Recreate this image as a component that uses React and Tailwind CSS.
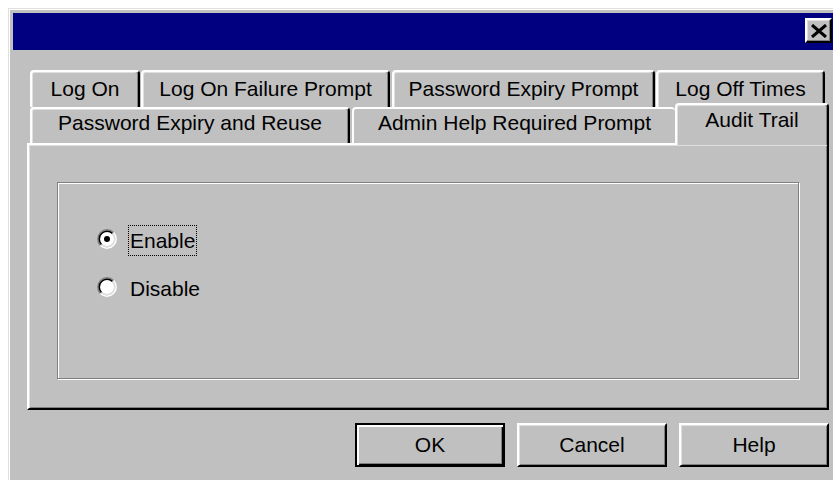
import React from 'react';

const BACK_ROW = [
  { label: 'Log On', cls: 'w-[110px]' },
  { label: 'Log On Failure Prompt', cls: 'ml-[1px] w-[249px]' },
  { label: 'Password Expiry Prompt', cls: 'ml-[2px] w-[263px]' },
  { label: 'Log Off Times', cls: 'ml-[1px] w-[169px]' },
];

const FRONT_ROW = [
  { label: 'Password Expiry and Reuse', cls: 'w-[320px]' },
  { label: 'Admin Help Required Prompt', cls: 'ml-[2px] w-[323px]', flush: true },
  { label: 'Audit Trail', cls: 'w-[154px]', active: true },
];

function Tab({ label, cls, active, flush, back }) {
  const base =
    'flex justify-center whitespace-nowrap leading-[24px] bg-[#c0c0c0] rounded-t-[4px] border-t-2 border-l-2 border-t-white border-l-white';
  if (active) {
    return (
      <div
        className={`${base} ${cls} relative z-10 -mt-[4px] h-[42px] pt-[3px] border-r-2 border-r-black shadow-[inset_-1px_0_0_#808080,inset_1px_1px_0_#dfdfdf]`}
      >
        {label}
      </div>
    );
  }
  const edge = flush
    ? 'border-r-0'
    : 'border-r-2 border-r-black shadow-[inset_-1px_0_0_#808080,inset_1px_1px_0_#dfdfdf]';
  const size = back ? 'h-[37px] pt-[5px]' : 'h-[36px] pt-[2px]';
  return <div className={`${base} ${cls} ${size} ${edge}`}>{label}</div>;
}

function Radio({ checked }) {
  return (
    <svg width="20" height="20" viewBox="0 0 20 20" className="mb-[4px] shrink-0">
      <circle cx="10" cy="10" r="7.2" fill="#fff" />
      <path d="M3.46 16.54 A9.25 9.25 0 0 1 16.54 3.46" fill="none" stroke="#808080" strokeWidth="1.5" />
      <path d="M16.54 3.46 A9.25 9.25 0 0 1 3.46 16.54" fill="none" stroke="#fff" strokeWidth="1.5" />
      <path d="M4.52 15.48 A7.75 7.75 0 0 1 15.48 4.52" fill="none" stroke="#000" strokeWidth="1.5" />
      <path d="M15.48 4.52 A7.75 7.75 0 0 1 4.52 15.48" fill="none" stroke="#dfdfdf" strokeWidth="1.5" />
      {checked && <circle cx="10" cy="10" r="3" fill="#000" />}
    </svg>
  );
}

function Button({ children, isDefault }) {
  const look = isDefault
    ? 'border-2 border-black shadow-[inset_2px_2px_0_#fff,inset_-1px_-1px_0_#000,inset_-2px_-2px_0_#808080]'
    : 'border-2 border-t-white border-l-white border-r-black border-b-black shadow-[inset_1px_1px_0_#dfdfdf,inset_-1px_-1px_0_#808080]';
  return (
    <button className={`flex h-[44px] w-[150px] items-center justify-center bg-[#c0c0c0] leading-[24px] ${look}`}>
      {children}
    </button>
  );
}

export default function App() {
  return (
    <div className="h-[480px] w-[833px] overflow-hidden bg-white font-['Liberation_Sans',Arial,sans-serif] text-[21px] text-black">
      <div className="ml-[8px] mt-[8px] h-[480px] w-[840px] border-l border-t border-[#dfdfdf] bg-[#c0c0c0] pl-[4px] pt-[4px] shadow-[inset_1px_1px_0_#fff]">
        {/* caption bar */}
        <div className="flex h-[37px] w-[822px] items-start justify-end bg-[#000080] pr-[3px] pt-[5px]">
          <button className="flex h-[25px] w-[27px] items-center justify-center border-2 border-t-white border-l-white border-r-black border-b-black bg-[#c0c0c0] shadow-[inset_-1px_-1px_0_#808080,inset_1px_1px_0_#dfdfdf]">
            <svg width="18" height="14" viewBox="0 0 18 14">
              <path d="M2 1 L16 13 M16 1 L2 13" stroke="#000" strokeWidth="3" />
            </svg>
          </button>
        </div>

        <div className="ml-[14px] mt-[20px] w-[802px]">
          {/* tab strip, two rows */}
          <div className="flex pl-[3px]">
            {BACK_ROW.map(t => (
              <Tab key={t.label} {...t} back />
            ))}
          </div>
          <div className="flex h-[36px] items-start pl-[3px]">
            {FRONT_ROW.map(t => (
              <Tab key={t.label} {...t} />
            ))}
          </div>

          {/* page body */}
          <div className="h-[267px] border-2 border-t-white border-l-white border-r-black border-b-black pl-[28px] pt-[37px] shadow-[inset_1px_1px_0_#dfdfdf,inset_-1px_-1px_0_#808080]">
            <div className="h-[197px] w-[742px] border border-[#808080] pl-[39px] pt-[42px] shadow-[1px_1px_0_#fff,inset_1px_1px_0_#fff]">
              <div className="flex flex-col gap-[17px]">
                <div className="flex h-[31px] items-center">
                  <Radio checked />
                  <span className="ml-[11px] border border-dotted border-black px-[1px] leading-[29px]">Enable</span>
                </div>
                <div className="flex h-[31px] items-center">
                  <Radio />
                  <span className="ml-[11px] border border-transparent px-[1px] leading-[29px]">Disable</span>
                </div>
              </div>
            </div>
          </div>

          <div className="mt-[13px] flex justify-end gap-[12px]">
            <Button isDefault>OK</Button>
            <Button>Cancel</Button>
            <Button>Help</Button>
          </div>
        </div>
      </div>
    </div>
  );
}
